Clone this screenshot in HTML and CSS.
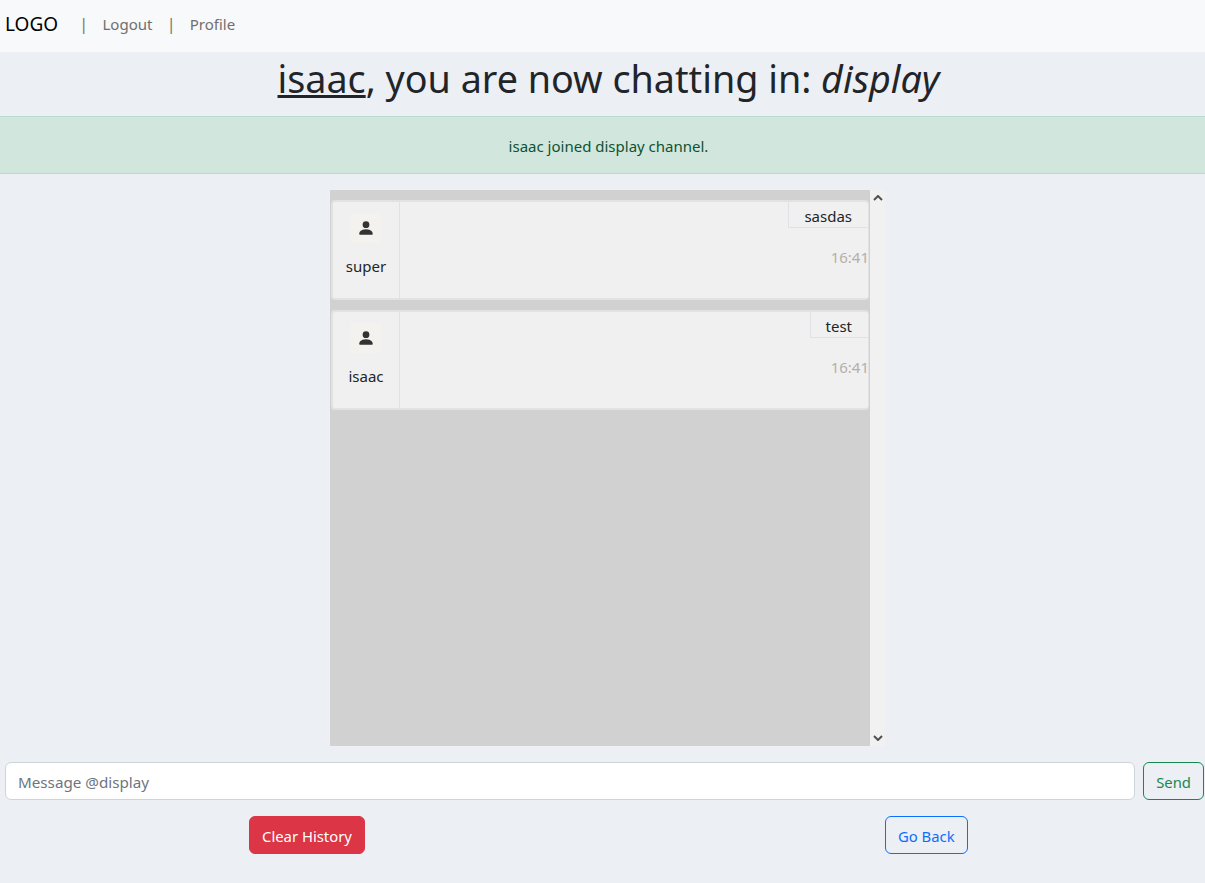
FILE: index.html
```html
<!DOCTYPE html>
<html lang="en">
<head>
<meta charset="utf-8">
<title>Chat</title>
<link rel="stylesheet" href="styles.css">
</head>
<body>
<nav class="navbar">
  <a class="brand" href="#">LOGO</a>
  <span class="sep">|</span>
  <a class="nav-link" href="#">Logout</a>
  <span class="sep">|</span>
  <a class="nav-link" href="#">Profile</a>
</nav>
<h1 class="title"><u>isaac</u>, you are now chatting in: <em>display</em></h1>
<div class="alert">isaac joined display channel.</div>
<section class="chat-wrap">
  <div class="chat">
    <div class="messages">
      <article class="message">
        <div class="author">
          <span class="avatar"><svg viewBox="0 0 16 16" width="18" height="18"><path fill="#333" d="M8 8a3 3 0 1 0 0-6 3 3 0 0 0 0 6zm-5 6s-1 0-1-1 1-4 6-4 6 3 6 4-1 1-1 1H3z"/></svg></span>
          <span class="name">super</span>
        </div>
        <div class="body">
          <div class="bubble">sasdas</div>
          <div class="time">16:41</div>
        </div>
      </article>
      <article class="message">
        <div class="author">
          <span class="avatar"><svg viewBox="0 0 16 16" width="18" height="18"><path fill="#333" d="M8 8a3 3 0 1 0 0-6 3 3 0 0 0 0 6zm-5 6s-1 0-1-1 1-4 6-4 6 3 6 4-1 1-1 1H3z"/></svg></span>
          <span class="name">isaac</span>
        </div>
        <div class="body">
          <div class="bubble">test</div>
          <div class="time">16:41</div>
        </div>
      </article>
    </div>
    <div class="scrollbar">
      <svg viewBox="0 0 10 6" width="10" height="6"><path d="M1 5l4-4 4 4" fill="none" stroke="#505050" stroke-width="2"/></svg>
      <svg viewBox="0 0 10 6" width="10" height="6"><path d="M1 1l4 4 4-4" fill="none" stroke="#505050" stroke-width="2"/></svg>
    </div>
  </div>
</section>
<form class="composer">
  <input class="input" type="text" placeholder="Message @display">
  <button class="btn btn-send" type="button">Send</button>
</form>
<div class="actions">
  <button class="btn btn-clear" type="button">Clear History</button>
  <button class="btn btn-back" type="button">Go Back</button>
</div>
</body>
</html>
```
FILE: styles.css
```css
* { box-sizing: border-box; }
html, body { margin: 0; height: 100%; }
body {
  background: #eceff4;
  color: #212529;
  font-family: "Noto Sans", "Open Sans", sans-serif;
  font-size: 16px;
  line-height: 24px;
}
.navbar {
  display: flex;
  align-items: center;
  height: 52px;
  padding: 0 5px 5px;
  background: #f8f9fa;
  font-size: 15px;
}
.brand { color: #000; font-size: 19px; text-decoration: none; margin-right: 21px; }
.sep { color: #7a7a70; font-size: 17px; }
.nav-link { color: #6f6f6f; text-decoration: none; margin: 0 14px; }
.title {
  margin: 0;
  height: 64px;
  padding-left: 12px;
  font-size: 37.7px;
  font-weight: 400;
  line-height: 54px;
  text-align: center;
}
.alert {
  height: 58px;
  padding-left: 12px;
  line-height: 58px;
  text-align: center;
  font-size: 15px;
  color: #0f5132;
  background: #d1e7dd;
  border-top: 1px solid #badbcc;
  border-bottom: 1px solid #badbcc;
}
.chat-wrap { display: flex; justify-content: center; padding: 16px 0 16px 10px; }
.chat { display: flex; width: 555px; height: 556px; }
.messages {
  flex: 1;
  padding-top: 10px;
  background: #d1d1d1;
  display: flex;
  flex-direction: column;
  gap: 10px;
}
.scrollbar {
  width: 15px;
  padding: 5px 0 5px;
  background: #f1f1f1;
  display: flex;
  flex-direction: column;
  justify-content: space-between;
  align-items: center;
}
.message {
  display: flex;
  height: 100px;
  margin: 0 1px;
  background: #f0f0f0;
  border: 2px solid #e2e2e2;
  border-right-width: 1px;
  border-radius: 4px;
}
.author {
  width: 67px;
  border-right: 1px solid #e2e2e2;
  display: flex;
  flex-direction: column;
  align-items: center;
  padding-top: 11px;
  font-size: 15px;
}
.avatar {
  width: 30px;
  height: 30px;
  background: #f3f2ee;
  display: flex;
  align-items: center;
  justify-content: center;
}
.name { margin-top: 11px; color: #212529; }
.body { flex: 1; display: flex; flex-direction: column; align-items: flex-end; }
.bubble {
  height: 26px;
  padding: 2px 16px 0 15px;
  line-height: 25px;
  font-size: 15px;
  border-left: 1px solid #dee2e6;
  border-bottom: 1px solid #dee2e6;
}
.time { margin: 17px -1px 0 0; font-size: 15px; color: #b4afaa; }
.composer { display: flex; gap: 8px; padding: 0 1px 0 5px; }
.input {
  flex: 1;
  height: 38px;
  padding: 2px 12px 0;
  border: 1px solid #ced4da;
  border-radius: 6px;
  background: #fff;
  font: inherit;
  font-size: 15.2px;
}
.input::placeholder { color: #6c757d; }
.btn {
  height: 38px;
  padding: 2px 12px 0;
  border-radius: 6px;
  background: transparent;
  border: 1px solid;
  font: inherit;
  font-size: 14.85px;
}
.btn-send { color: #198754; border-color: #198754; }
.actions { display: flex; padding: 16px 0 0 249px; gap: 520px; }
.btn-clear { background: #dc3545; border-color: #dc3545; color: #fff; }
.btn-back { color: #0d6efd; border-color: #0d6efd; }
```
